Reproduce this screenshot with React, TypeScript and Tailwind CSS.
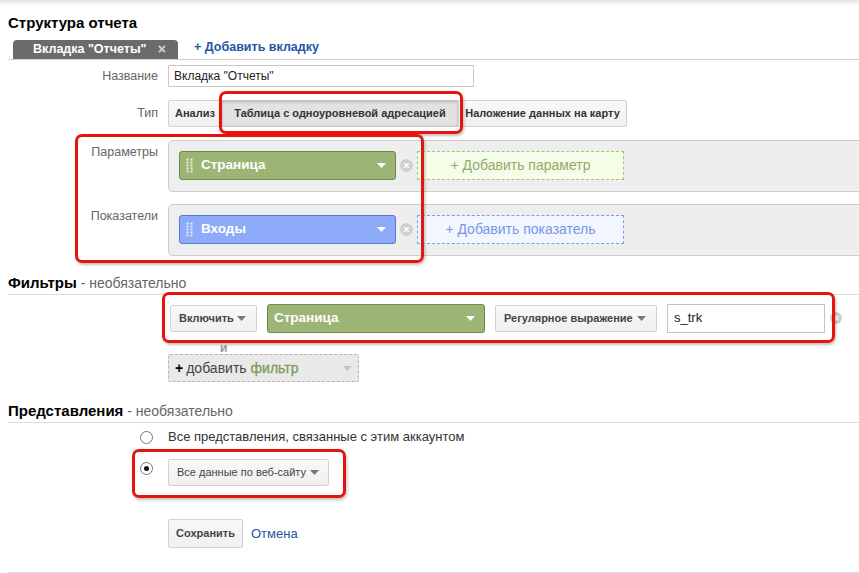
import React from "react";

function Caret({ color = "#fff", className = "" }: { color?: string; className?: string }) {
    return (
        <svg width="9" height="5" viewBox="0 0 9 5" className={`shrink-0 ${className}`} aria-hidden>
            <path d="M0 0h9L4.5 5z" fill={color} />
        </svg>
    );
}

function Grip() {
    return (
        <svg width="7" height="15" viewBox="0 0 7 15" aria-hidden>
            {[0, 1, 2, 3, 4].map((r) => (
                <g key={r} fill="#fff" fillOpacity="0.75">
                    <rect x="0.5" y={r * 3 + 0.5} width="2" height="2" />
                    <rect x="4.5" y={r * 3 + 0.5} width="2" height="2" />
                </g>
            ))}
        </svg>
    );
}

function RemoveDot({ size = 13 }: { size?: number }) {
    return (
        <svg width={size} height={size} viewBox="0 0 13 13" aria-hidden className="shrink-0">
            <circle cx="6.5" cy="6.5" r="6.5" fill="#cfcfcf" />
            <path d="M4.2 4.2l4.6 4.6M8.8 4.2l-4.6 4.6" stroke="#fff" strokeWidth="1.6" />
        </svg>
    );
}

function Chip({ label, tone, grip = true }: { label: string; tone: "green" | "blue"; grip?: boolean }) {
    const colors =
        tone === "green" ? "bg-[#9db574] border-[#6e8946]" : "bg-[#8eabf9] border-[#5a76d6]";
    return (
        <div className={`flex h-[29px] w-full items-center rounded-[3px] border ${colors} pl-[6px] pr-[9px]`}>
            {grip ? <Grip /> : null}
            <span className={`${grip ? "ml-[8px]" : ""} text-[13.5px] font-bold text-white`}>{label}</span>
            <Caret className="ml-auto" />
        </div>
    );
}

function GreyButton({ children, className = "" }: { children: React.ReactNode; className?: string }) {
    return (
        <div
            className={`flex h-[27px] items-center whitespace-nowrap rounded-[2px] border border-[#d2d2d2] bg-gradient-to-b from-[#f8f8f8] to-[#f0f0f0] text-[11px] text-[#444] ${className}`}
        >
            {children}
        </div>
    );
}

function Redline({ className }: { className: string }) {
    return (
        <div
            className={`pointer-events-none absolute rounded-[7px] border-[3px] border-[#e5140e] shadow-[1px_2px_3px_rgba(0,0,0,0.25)] ${className}`}
        />
    );
}

export default function App() {
    return (
        <div className="relative h-[573px] w-[859px] overflow-hidden bg-white font-['Liberation_Sans',Arial,sans-serif] text-[#333]">
            <div className="h-[6px] bg-gradient-to-b from-[#e4e4e4] to-white" />

            <div className="pl-2">
                <h1 className="mt-[8px] text-[15px] font-bold leading-[18px] text-black">Структура отчета</h1>

                {/* tabs */}
                <div className="mt-[8px] flex h-[20px] items-end border-b border-[#cfcfcf]">
                    <div className="ml-[5px] flex h-[19px] w-[165px] items-center rounded-t-[4px] bg-[#6b6b6b] pl-[20px] pr-[12px] text-[12.5px] font-bold text-white">
                        Вкладка "Отчеты"
                        <span className="ml-auto text-[14px] text-[#d5d5d5]">×</span>
                    </div>
                    <div className="mb-[2px] ml-[16px] text-[12.5px] font-bold text-[#2556a6]">+ Добавить вкладку</div>
                </div>

                {/* name */}
                <div className="mt-[5px] flex items-center">
                    <div className="w-[150px] text-right text-[12.5px] text-[#666]">Название</div>
                    <div className="ml-[10px] flex h-[22px] w-[306px] items-center border border-[#c8c8c8] pl-[5px] text-[12px] text-[#222]">
                        Вкладка "Отчеты"
                    </div>
                </div>

                {/* type */}
                <div className="mt-[13px] flex items-center">
                    <div className="w-[150px] text-right text-[12.5px] text-[#666]">Тип</div>
                    <div className="ml-[10px] flex h-[27px] whitespace-nowrap text-[11px] font-bold text-[#333]">
                        <div className="flex w-[54px] items-center justify-center rounded-l-[2px] border border-[#d2d2d2] bg-gradient-to-b from-[#f8f8f8] to-[#f0f0f0]">
                            Анализ
                        </div>
                        <div className="flex w-[236px] items-center justify-center border-y border-[#c4c4c4] bg-[#e2e2e2] shadow-[inset_0_1px_3px_rgba(0,0,0,0.2)]">
                            Таблица с одноуровневой адресацией
                        </div>
                        <div className="flex w-[169px] items-center justify-center rounded-r-[2px] border border-[#d2d2d2] bg-gradient-to-b from-[#f8f8f8] to-[#f0f0f0]">
                            Наложение данных на карту
                        </div>
                    </div>
                </div>

                {/* parameters */}
                <div className="mt-[13px] flex">
                    <div className="w-[150px] pt-[4px] text-right text-[12.5px] leading-[16px] text-[#666]">Параметры</div>
                    <div className="ml-[10px] mr-[-12px] flex h-[52px] flex-1 items-start gap-[4px] rounded-l-[5px] border border-[#cdcdcd] bg-[#eeeeee] pl-[10px] pt-[10px]">
                        <div className="w-[217px]">
                            <Chip label="Страница" tone="green" />
                        </div>
                        <div className="mt-[8px]">
                            <RemoveDot />
                        </div>
                        <div className="flex h-[29px] w-[207px] items-center justify-center border border-dashed border-[#a8c07c] bg-[#f4fde8] text-[14px] text-[#93aa68]">
                            + Добавить параметр
                        </div>
                    </div>
                </div>

                {/* metrics */}
                <div className="mt-[12px] flex">
                    <div className="w-[150px] pt-[4px] text-right text-[12.5px] leading-[16px] text-[#666]">Показатели</div>
                    <div className="ml-[10px] mr-[-12px] flex h-[52px] flex-1 items-start gap-[4px] rounded-l-[5px] border border-[#cdcdcd] bg-[#eeeeee] pl-[10px] pt-[10px]">
                        <div className="w-[217px]">
                            <Chip label="Входы" tone="blue" />
                        </div>
                        <div className="mt-[8px]">
                            <RemoveDot />
                        </div>
                        <div className="flex h-[29px] w-[207px] items-center justify-center border border-dashed border-[#7f9ced] bg-[#f1f6ff] text-[14px] text-[#7d95e6]">
                            + Добавить показатель
                        </div>
                    </div>
                </div>

                {/* filters */}
                <h2 className="mt-[18px] border-b border-[#dcdcdc] pb-[2px] leading-[18px]">
                    <span className="text-[15px] font-bold text-black">Фильтры</span>
                    <span className="text-[14px] text-[#666]"> - необязательно</span>
                </h2>

                <div className="mt-[8px] flex h-[30px] items-center pl-[162px]">
                    <GreyButton className="w-[87px] pl-[8px] pr-[10px] font-bold">
                        Включить
                        <Caret color="#777" className="ml-auto" />
                    </GreyButton>
                    <div className="ml-[10px] w-[218px]">
                        <Chip label="Страница" tone="green" grip={false} />
                    </div>
                    <GreyButton className="ml-[10px] w-[162px] pl-[8px] pr-[10px] font-bold">
                        Регулярное выражение
                        <Caret color="#777" className="ml-auto" />
                    </GreyButton>
                    <div className="ml-[10px] flex h-[29px] w-[158px] items-center border border-[#c4c4c4] pl-[6px] text-[13px] text-[#222]">
                        s_trk
                    </div>
                    <div className="ml-[5px]">
                        <RemoveDot size={12} />
                    </div>
                </div>

                <div className="mt-[9px] pl-[212px] text-[12px] font-bold leading-[12px] text-[#999]">и</div>

                <div className="ml-[160px] mt-0 flex h-[28px] w-[191px] items-center rounded-[2px] border border-dashed border-[#b4b4b4] bg-[#e9e9e9] pl-[6px] pr-[6px] text-[14px]">
                    <span className="font-bold text-black">+</span>
                    <span className="ml-[3px] text-[#444]">добавить</span>
                    <span className="ml-[4px] text-[#7f9a52] [-webkit-text-stroke:0.3px_#7f9a52]">фильтр</span>
                    <Caret color="#c4c4c4" className="ml-auto" />
                </div>

                {/* views */}
                <h2 className="mt-[20px] border-b border-[#dcdcdc] pb-[2px] leading-[18px]">
                    <span className="text-[15px] font-bold text-black">Представления</span>
                    <span className="text-[14px] text-[#666]"> - необязательно</span>
                </h2>

                <div className="mt-[6px] flex h-[16px] items-center pl-[132px]">
                    <span className="h-[13px] w-[13px] rounded-full border border-[#777] bg-white" />
                    <span className="ml-[15px] text-[13px] text-[#333]">Все представления, связанные с этим аккаунтом</span>
                </div>

                <div className="mt-[14px] flex items-start pl-[132px]">
                    <span className="mt-[3px] flex h-[13px] w-[13px] items-center justify-center rounded-full border border-[#777] bg-white">
                        <span className="h-[5px] w-[5px] rounded-full bg-[#111]" />
                    </span>
                    <GreyButton className="ml-[15px] w-[161px] pl-[8px] pr-[9px] text-[11.5px]">
                        Все данные по веб-сайту
                        <Caret color="#777" className="ml-auto" />
                    </GreyButton>
                </div>

                <div className="mt-[33px] flex items-center pl-[160px]">
                    <GreyButton className="h-[29px] w-[75px] justify-center text-[11.5px] font-bold">Сохранить</GreyButton>
                    <span className="ml-[8px] text-[13px] text-[#2556a6]">Отмена</span>
                </div>

                <div className="mt-[24px] border-t border-[#dcdcdc]" />
            </div>

            <Redline className="left-[219px] top-[91px] h-[43px] w-[244px]" />
            <Redline className="left-[75px] top-[134px] h-[129px] w-[349px]" />
            <Redline className="left-[162px] top-[292px] h-[51px] w-[673px]" />
            <Redline className="left-[132px] top-[449px] h-[49px] w-[214px]" />
        </div>
    );
}
